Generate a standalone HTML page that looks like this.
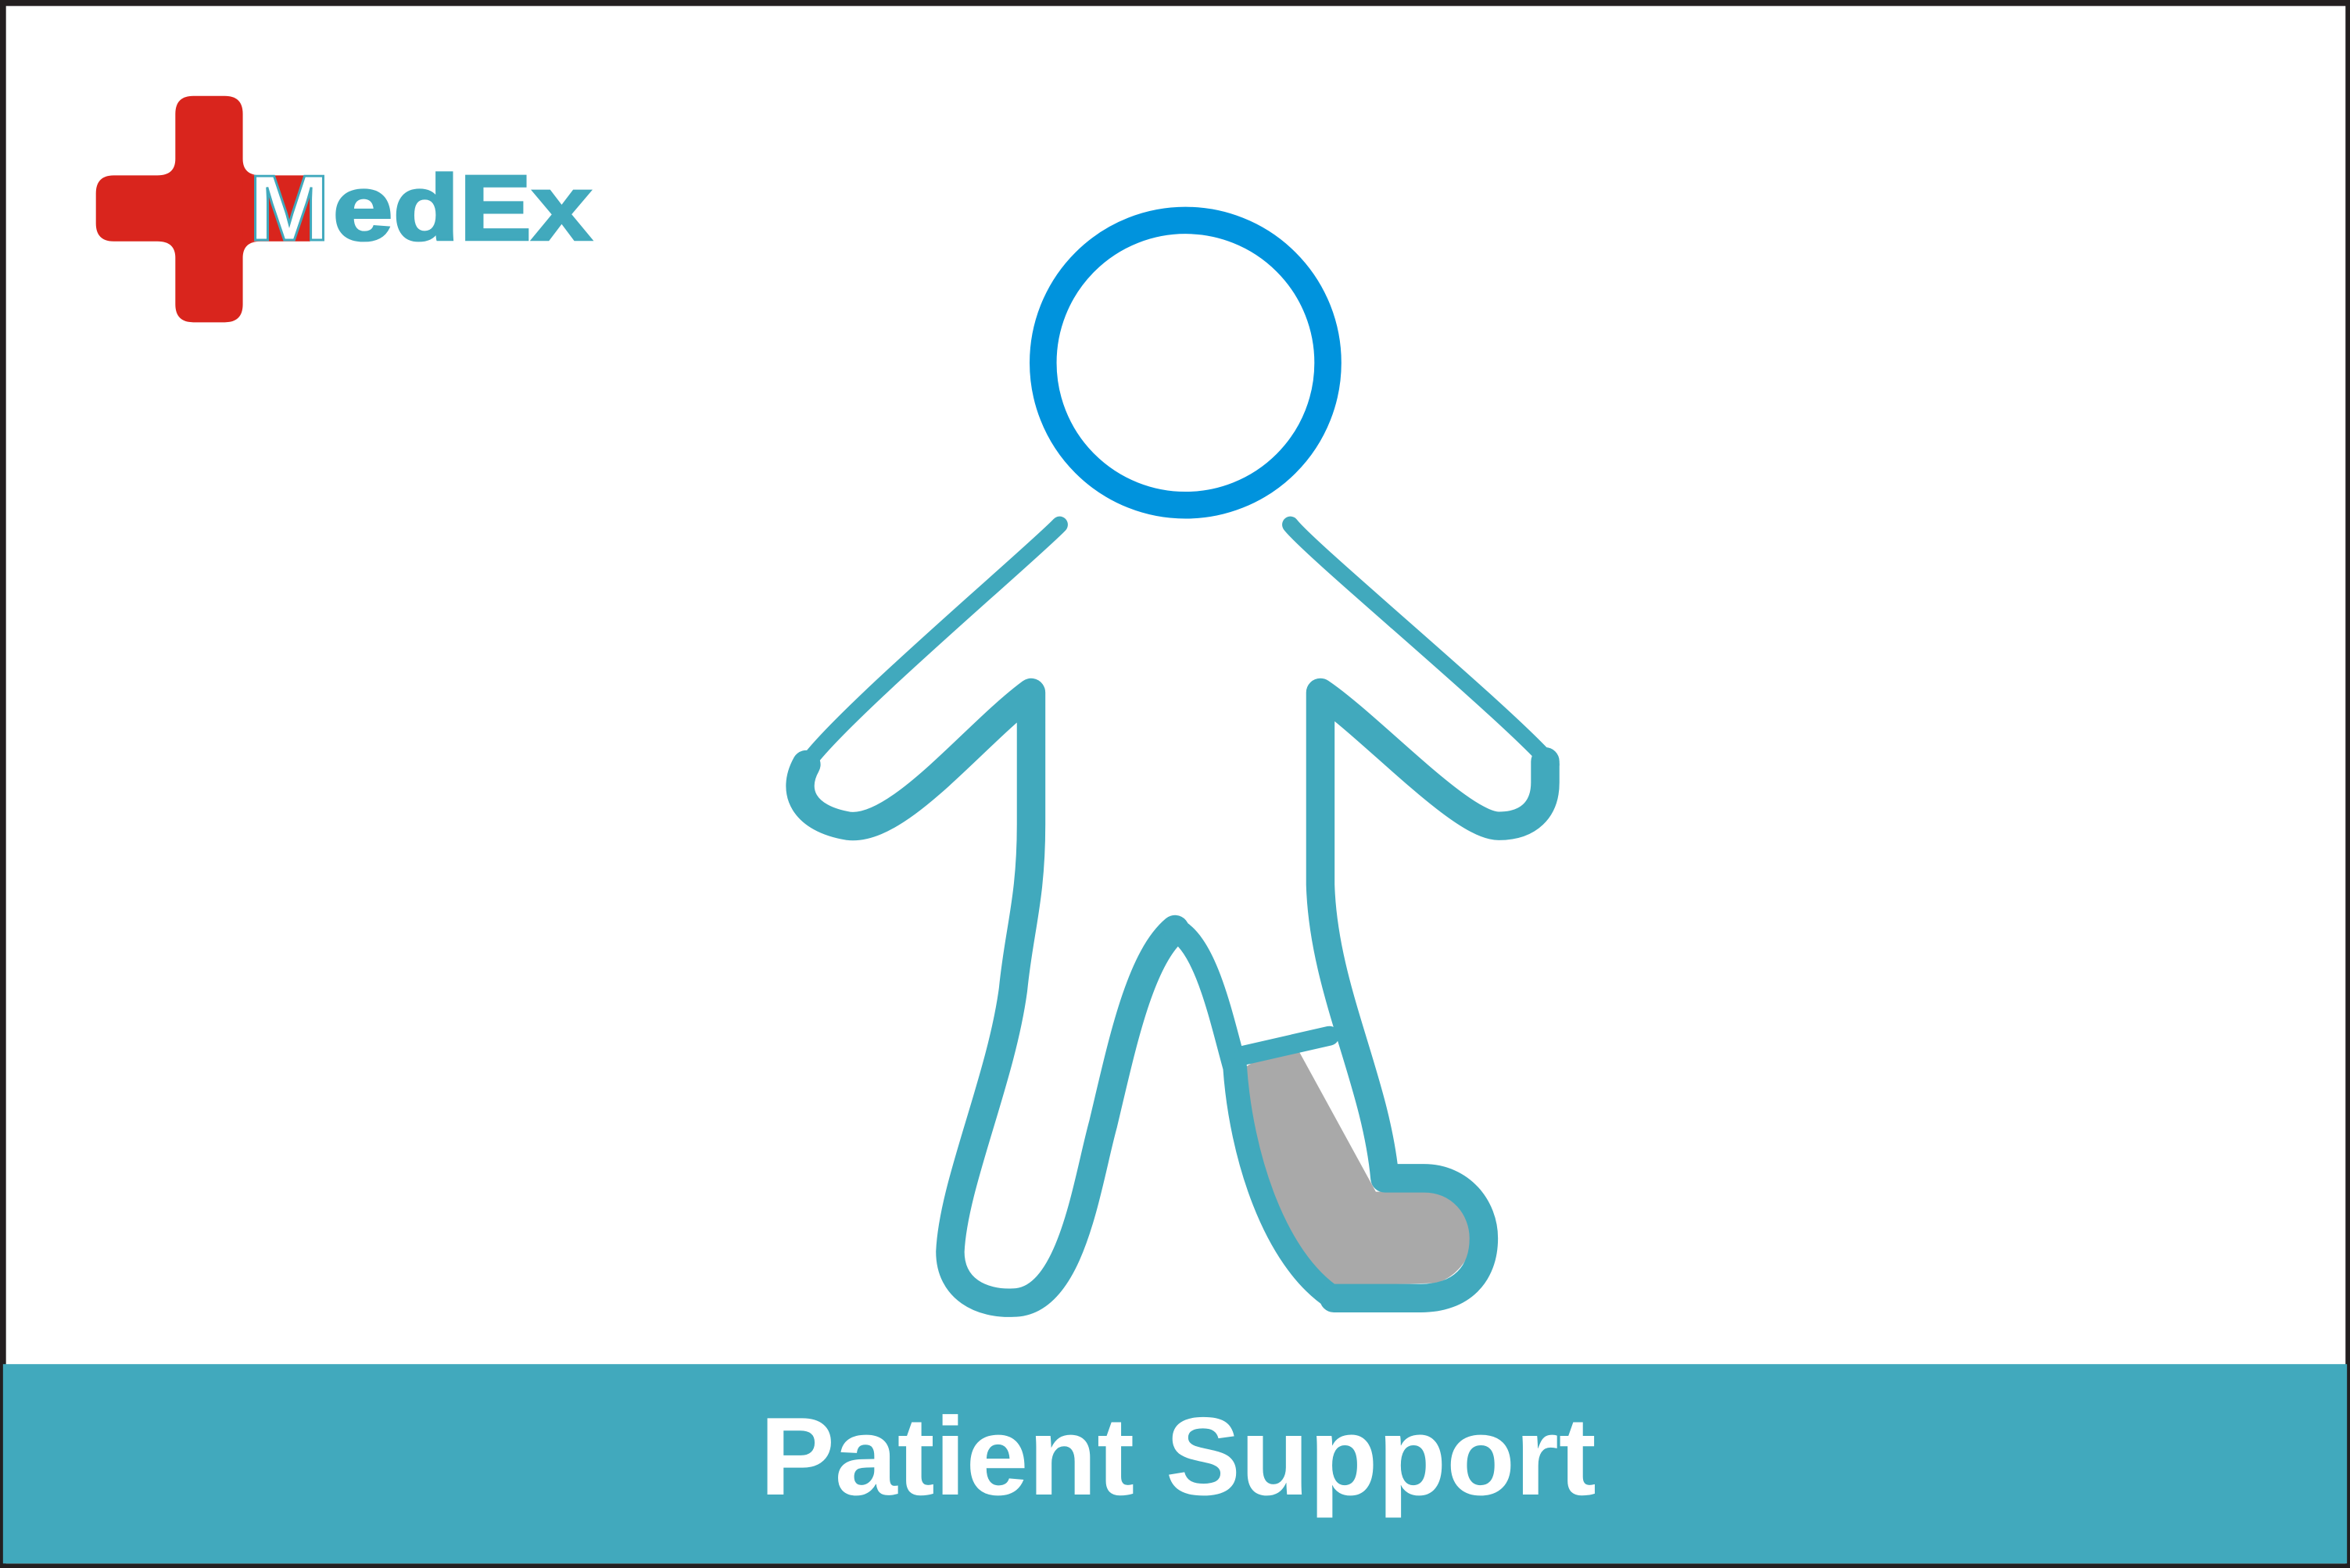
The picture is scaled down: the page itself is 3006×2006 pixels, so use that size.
<!DOCTYPE html>
<html><head><meta charset="utf-8"><style>
html,body{margin:0;padding:0;background:#fff}
svg{display:block}
</style></head><body>
<svg width="3006" height="2006" viewBox="0 0 1568 1046" preserveAspectRatio="none" xmlns="http://www.w3.org/2000/svg">
<rect x="0" y="0" width="1568" height="1046" fill="#231f20"/>
<rect x="4" y="4" width="1561" height="1039" fill="#fff"/>
<rect x="2" y="910" width="1564" height="133" fill="#41a9bd"/>
<text x="786" y="997" text-anchor="middle" font-family="Liberation Sans, sans-serif" font-weight="bold" font-size="74" fill="#fff" textLength="558" lengthAdjust="spacingAndGlyphs">Patient Support</text>

<!-- cross -->
<path d="M129,64 H150 Q162,64 162,76 V106 Q162,117 174,117 H168 V161 H174 Q162,161 162,172 V203 Q162,215 150,215 H129 Q117,215 117,203 V172 Q117,161 105,161 H76 Q64,161 64,149 V129 Q64,117 76,117 H105 Q117,117 117,106 V76 Q117,64 129,64 Z" fill="#d9251d"/>
<rect x="162" y="117" width="45" height="44" fill="#d9251d"/>
<text x="193" y="160" text-anchor="middle" font-family="Liberation Sans, sans-serif" font-weight="bold" font-size="62" fill="#fff" stroke="#41a9bd" stroke-width="1.5" textLength="54" lengthAdjust="spacingAndGlyphs">M</text>
<text x="222" y="160" font-family="Liberation Sans, sans-serif" font-weight="bold" font-size="62" fill="#41a9bd" stroke="#41a9bd" stroke-width="1.5" textLength="173" lengthAdjust="spacingAndGlyphs">edEx</text>

<!-- head -->
<circle cx="791" cy="242" r="95" fill="none" stroke="#0093dd" stroke-width="18"/>

<!-- cast -->
<path d="M828,715 C835,705 870,698 866,700 L918,795 L955,795 C968,795 982,812 982,828 C982,840 968,856 955,856 L890,858 C850,830 832,770 828,715 Z" fill="#a9a9a9"/>

<g fill="none" stroke="#41a9bd" stroke-linejoin="round" stroke-linecap="round">
<path d="M707,350 C690,368 560,478 538,510" stroke-width="11"/>
<path d="M861,350 C875,368 1008,478 1035,510" stroke-width="11"/>
<path d="M538,510 C528,528 536,546 566,551 C600,555 650,490 688,462 L688,550 C688,600 680,620 676,660 C668,720 636,790 634,835 C634,860 655,870 676,869 C715,869 725,790 736,750 C748,700 760,640 784,620" stroke-width="19"/>
<path d="M784,620 C805,630 815,680 824,712 C828,770 850,840 890,866" stroke-width="16"/>
<path d="M890,866 L948,866 C975,866 990,850 990,826 C990,806 975,786 950,786 L924,786 C918,720 883,660 881,590 L881,462 C915,485 975,551 1000,551 C1020,551 1031,540 1031,522 L1031,508" stroke-width="19"/>
<path d="M830,704 L887,691" stroke-width="13"/>
</g>
</svg>
</body></html>
